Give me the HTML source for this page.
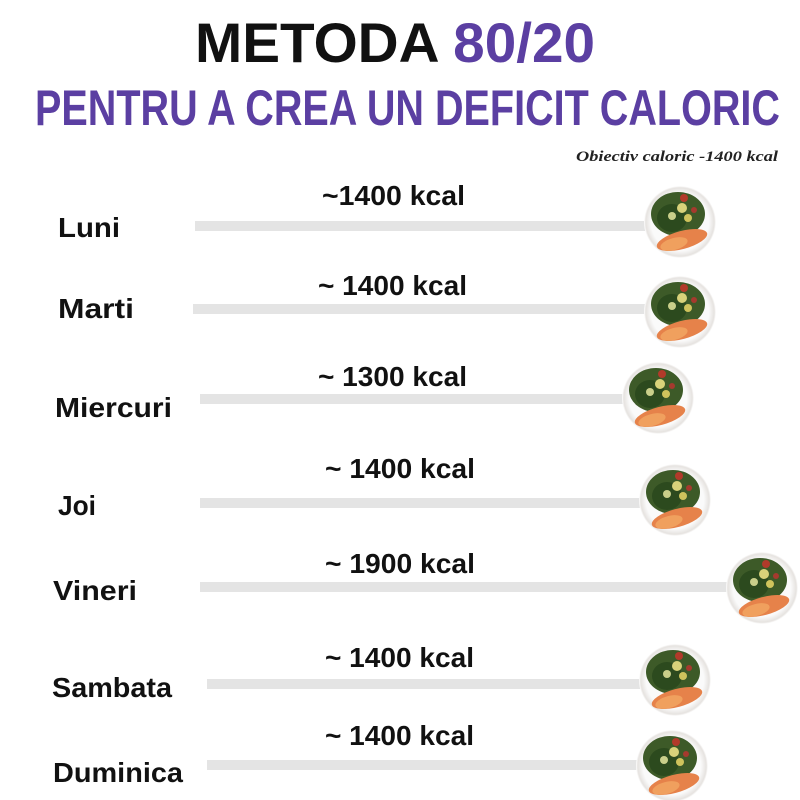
<!DOCTYPE html>
<html><head><meta charset="utf-8"><style>
html,body{margin:0;padding:0;background:#fff;width:800px;height:800px;overflow:hidden}
svg{display:block}
text{font-family:"Liberation Sans",sans-serif;font-weight:bold}
.d{font-size:28px;fill:#111}
.k{font-size:28px;fill:#111}
</style></head><body>
<svg width="800" height="800" viewBox="0 0 800 800">
<defs>
<radialGradient id="pl" cx="50%" cy="50%" r="50%">
<stop offset="80%" stop-color="#fafafa"/><stop offset="95%" stop-color="#e6e3e0"/><stop offset="100%" stop-color="#fff"/>
</radialGradient>
<g id="plate">
<circle cx="0" cy="0" r="36" fill="url(#pl)"/>
<ellipse cx="-2" cy="-8" rx="27" ry="22" fill="#3d5a28"/>
<ellipse cx="-8" cy="-4" rx="15" ry="14" fill="#2c4a1e"/>
<circle cx="2" cy="-14" r="5" fill="#d8d27a"/>
<circle cx="-8" cy="-6" r="4" fill="#c9cf8a"/>
<circle cx="8" cy="-4" r="4" fill="#cfc35c"/>
<circle cx="4" cy="-24" r="4" fill="#b23a2a"/>
<circle cx="14" cy="-12" r="3" fill="#a53a2e"/>
<ellipse cx="2" cy="18" rx="26" ry="9" fill="#e6824a" transform="rotate(-15 2 18)"/>
<ellipse cx="-6" cy="22" rx="14" ry="6" fill="#f0a05e" transform="rotate(-15 -6 22)"/>
</g>
</defs>
<text x="195" y="62" font-size="56" textLength="400" lengthAdjust="spacingAndGlyphs"><tspan fill="#111">METODA </tspan><tspan fill="#5b3fa2">80/20</tspan></text>
<text x="35" y="125" font-size="50" fill="#5b3fa2" textLength="745" lengthAdjust="spacingAndGlyphs">PENTRU A CREA UN DEFICIT CALORIC</text>
<text x="576" y="161" font-size="15" fill="#222" style="font-family:'Liberation Serif',serif;font-style:italic" textLength="202" lengthAdjust="spacingAndGlyphs">Obiectiv caloric -1400 kcal</text>

<g fill="#e4e4e4">
<rect x="195" y="221" width="450" height="10"/>
<rect x="193" y="304" width="452" height="10"/>
<rect x="200" y="394" width="425" height="10"/>
<rect x="200" y="498" width="445" height="10"/>
<rect x="200" y="582" width="530" height="10"/>
<rect x="207" y="679" width="438" height="10"/>
<rect x="207" y="760" width="438" height="10"/>
</g>

<text class="d" x="58" y="237" textLength="62" lengthAdjust="spacingAndGlyphs">Luni</text>
<text class="d" x="58" y="318" textLength="76" lengthAdjust="spacingAndGlyphs">Marti</text>
<text class="d" x="55" y="417" textLength="117" lengthAdjust="spacingAndGlyphs">Miercuri</text>
<text class="d" x="58" y="515" textLength="38" lengthAdjust="spacingAndGlyphs">Joi</text>
<text class="d" x="53" y="600" textLength="84" lengthAdjust="spacingAndGlyphs">Vineri</text>
<text class="d" x="52" y="697" textLength="120" lengthAdjust="spacingAndGlyphs">Sambata</text>
<text class="d" x="53" y="782" textLength="130" lengthAdjust="spacingAndGlyphs">Duminica</text>

<text class="k" x="322" y="205" textLength="143" lengthAdjust="spacingAndGlyphs">~1400 kcal</text>
<text class="k" x="318" y="295" textLength="149" lengthAdjust="spacingAndGlyphs">~ 1400 kcal</text>
<text class="k" x="318" y="386" textLength="149" lengthAdjust="spacingAndGlyphs">~ 1300 kcal</text>
<text class="k" x="325" y="478" textLength="150" lengthAdjust="spacingAndGlyphs">~ 1400 kcal</text>
<text class="k" x="325" y="573" textLength="150" lengthAdjust="spacingAndGlyphs">~ 1900 kcal</text>
<text class="k" x="325" y="667" textLength="149" lengthAdjust="spacingAndGlyphs">~ 1400 kcal</text>
<text class="k" x="325" y="745" textLength="149" lengthAdjust="spacingAndGlyphs">~ 1400 kcal</text>

<use href="#plate" x="680" y="222"/>
<use href="#plate" x="680" y="312"/>
<use href="#plate" x="658" y="398"/>
<use href="#plate" x="675" y="500"/>
<use href="#plate" x="762" y="588"/>
<use href="#plate" x="675" y="680"/>
<use href="#plate" x="672" y="766"/>
</svg>
</body></html>
